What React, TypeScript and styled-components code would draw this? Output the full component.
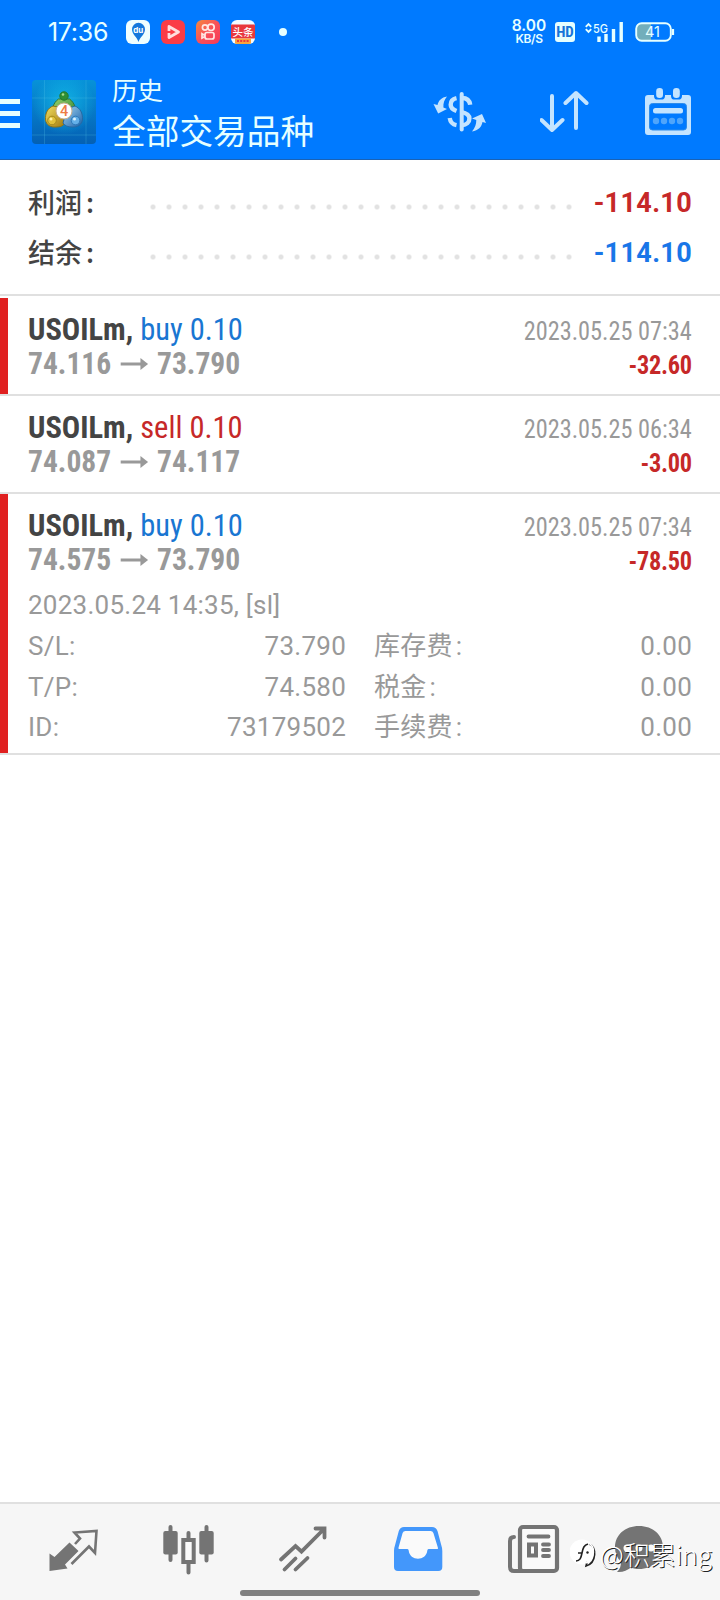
import React from 'react';
import styled, { createGlobalStyle } from 'styled-components';

const GlobalStyle = createGlobalStyle`
  * { box-sizing: border-box; }
  body { margin: 0; background: #fff; }
`;

const BLUE = '#007aff';
const PALE = '#c4e4ff';
const GREY = '#747474';

const Screen = styled.div`
  width: 720px;
  height: 1600px;
  display: flex;
  flex-direction: column;
  background: #fff;
  font-family: Roboto, "Noto Sans CJK SC", sans-serif;
  overflow: hidden;
`;

const Header = styled.header`
  height: 160px;
  background: ${BLUE};
  border-bottom: 1px solid #1a62b5;
  color: #e6ffff;
`;

const StatusBar = styled.div`
  display: flex;
  align-items: center;
  height: 64px;
  padding-left: 48px;
  padding-right: 45px;
`;

const Clock = styled.span`
  width: 78px;
  font: 400 25px/30px Inter, sans-serif;
  letter-spacing: -0.3px;
`;

const AppBadges = styled.div`
  display: flex;
  align-items: center;
  gap: 11px;
  flex: 1;
  svg { display: block; }
`;

const Dot = styled.i`
  width: 8px;
  height: 8px;
  margin-left: 13px;
  border-radius: 50%;
  background: #e6ffff;
`;

const Speed = styled.div`
  display: flex;
  flex-direction: column;
  align-items: center;
  width: 36px;
  margin-right: 8px;
  font: 600 15.5px/13px Inter, sans-serif;
  small { font-size: 12px; line-height: 13px; letter-spacing: -0.4px; }
`;

const HdTag = styled.span`
  width: 20px;
  height: 20px;
  margin-right: 10px;
  border-radius: 3px;
  background: #e6ffff;
  color: #1674d8;
  font: 700 15px/20px "Roboto", sans-serif;
  font-stretch: 75%;
  text-align: center;
`;

const Toolbar = styled.div`
  display: flex;
  align-items: center;
  height: 96px;
  > svg { flex: none; }
`;

const Burger = styled.div`
  width: 20px;
  display: flex;
  flex-direction: column;
  gap: 7px;
  margin: 3px 12px 0 0;
  i { height: 5px; background: #e6ffff; }
`;

const Titles = styled.div`
  flex: 1;
  padding: 0 0 2px 16px;
  font-family: "Noto Sans CJK SC", sans-serif;
`;

const Subtitle = styled.div`
  font-size: 25.5px;
  line-height: 36px;
`;

const Title = styled.div`
  font-size: 33.7px;
  line-height: 45px;
`;

const Actions = styled.div`
  display: flex;
  align-items: center;
  width: 287px;
  gap: 53px;
  svg { display: block; flex: none; }
`;

const Summary = styled.section`
  height: 136px;
  padding: 17px 28px 0;
  border-bottom: 2px solid #e0e0e0;
  margin-bottom: 2px;
`;

const SummaryRow = styled.div`
  display: flex;
  align-items: center;
  height: 50px;
  font-weight: 500;
  color: #444;
`;

const SummaryLabel = styled.span`
  width: 121px;
  margin-top: -1px;
  font: 500 27px/40px "Noto Sans CJK SC", sans-serif;
  white-space: nowrap;
`;

const Colon = styled.span<{ $gap: number }>`
  margin-left: ${p => p.$gap}px;
`;

const Leader = styled.span`
  width: 432px;
  height: 6px;
  margin-top: 10px;
  background: radial-gradient(circle at 4px 3px, #e2e2e2 1.8px, transparent 3.2px) 0 0 / 16px 6px repeat-x;
`;

const SummaryValue = styled.span<{ $color: string }>`
  flex: 1;
  padding-top: 2px;
  text-align: right;
  color: ${p => p.$color};
  font-size: 27px;
  font-weight: 700;
  letter-spacing: 0.35px;
`;

const Deal = styled.article<{ $loss?: boolean }>`
  padding: 14px 28px 0 20px;
  border-left: 8px solid ${p => (p.$loss ? '#e02020' : '#fff')};
  background: #fff;
`;

const Divider = styled.div`
  height: 2px;
  background: #e0e0e0;
`;

const DealHead = styled.div<{ $open: boolean }>`
  display: flex;
  justify-content: space-between;
  height: ${p => (p.$open ? 77 : 82)}px;
  font-family: "Roboto Condensed", Roboto, sans-serif;
  font-stretch: 75%;
  white-space: nowrap;
`;

const DealLeft = styled.div`
  transform: scaleX(0.953);
  transform-origin: left;
`;

const Symbol = styled.div`
  font-size: 32px;
  line-height: 34px;
  font-weight: 700;
  color: #444;
`;

const Side = styled.span<{ $sell?: boolean }>`
  font-weight: 400;
  color: ${p => (p.$sell ? '#c62828' : '#1976d2')};
`;

const Prices = styled.div`
  display: flex;
  align-items: center;
  gap: 9.5px;
  font-size: 31px;
  line-height: 35px;
  font-weight: 700;
  color: #999;
`;

const DealRight = styled.div`
  padding-top: 2px;
  text-align: right;
  font-size: 26px;
  line-height: 34px;
  color: #999;
  transform: scaleX(0.935);
  transform-origin: right;
`;

const Profit = styled.div`
  font-weight: 700;
  letter-spacing: -0.3px;
  color: #c62828;
`;

const Details = styled.div`
  height: 168px;
  font-size: 26px;
  line-height: 41px;
  color: #999;
  font-weight: 400;
  letter-spacing: 0.25px;
`;

const DetailGrid = styled.div`
  display: grid;
  grid-template-columns: 1fr 1fr;
  column-gap: 28px;
  grid-auto-rows: 40.5px;
`;

const Pair = styled.div`
  display: flex;
  justify-content: space-between;
`;

const Spacer = styled.div`
  flex: 1;
`;

const TabBar = styled.nav`
  height: 98px;
  border-top: 2px solid #e0e0e0;
  background: #f6f6f6;
  display: flex;
  flex-direction: column;
  align-items: center;
`;

const Tabs = styled.div`
  display: flex;
  width: 100%;
  height: 86px;
  padding: 11px 0 0 15px;
`;

const Tab = styled.div`
  position: relative;
  flex: none;
  width: 115px;
  display: flex;
  justify-content: center;
  > svg { display: block; flex: none; }
  &:last-child { margin-left: -9px; }
`;

const HomeIndicator = styled.i`
  width: 240px;
  height: 6px;
  border-radius: 3px;
  background: #808080;
`;

const Watermark = styled.div`
  position: absolute;
  left: -11px;
  top: 20px;
  display: flex;
  align-items: center;
  gap: 4px;
  color: #fff;
  font: 300 26px/38px "Noto Sans CJK SC", sans-serif;
  white-space: nowrap;
  text-shadow: 1px 1px 0.5px #222;
`;

const Arrow = () => (
  <svg width="29" height="14" viewBox="0 0 29 14">
    <path d="M0 7h22" stroke="#999" strokeWidth="3" />
    <path d="M21 1l8 6-8 6z" fill="#999" />
  </svg>
);

const MapBadge = () => (
  <svg width="24" height="24" viewBox="0 0 24 24">
    <rect width="24" height="24" rx="6" fill="#effeff" />
    <path d="M12.500 22C11 17 6 14.500 6 9.300a6.500 6.500 0 0 1 13 0c0 5.200-5 7.700-6.500 12.700z" fill="#1478dc" />
    <text x="12.200" y="12.500" fontSize="8" fontWeight="700" fontFamily="Inter" fill="#fff" textAnchor="middle">du</text>
  </svg>
);

const VideoBadge = () => (
  <svg width="24" height="24" viewBox="0 0 24 24">
    <rect width="24" height="24" rx="6" fill="#fb3c46" />
    <path d="M8 6.500l9.500 5.500L8 17.500z" fill="none" stroke="#ffdede" strokeWidth="2.800" strokeLinejoin="round" />
    <path d="M6 12h7" stroke="#fb3c46" strokeWidth="2" />
  </svg>
);

const CameraBadge = () => (
  <svg width="24" height="24" viewBox="0 0 24 24">
    <defs>
      <linearGradient id="cam" x1="0" y1="0" x2="1" y2="1">
        <stop offset="0" stopColor="#f58a3c" />
        <stop offset="0.500" stopColor="#f9505a" />
        <stop offset="1" stopColor="#f63a58" />
      </linearGradient>
    </defs>
    <rect width="24" height="24" rx="6" fill="url(#cam)" />
    <g fill="none" stroke="#ffe8e4" strokeWidth="1.700">
      <circle cx="9" cy="7.500" r="2.600" />
      <circle cx="15" cy="7.300" r="3.200" />
      <rect x="9" y="12.500" width="9" height="6.500" rx="2" />
      <path d="M9 15.500l-3-1.700v4.200l3-1.500" />
    </g>
  </svg>
);

const NewsBadge = () => (
  <svg width="24" height="24" viewBox="0 0 24 24">
    <defs><clipPath id="news"><rect width="24" height="24" rx="6" /></clipPath></defs>
    <g clipPath="url(#news)">
      <rect width="24" height="24" fill="#f4fbff" />
      <rect y="4.500" width="24" height="14" fill="#e8383d" />
      <rect x="4" y="18.500" width="16" height="5.500" fill="#f9a43c" />
      <path d="M6 21h12" stroke="#e8383d" strokeWidth="2" strokeDasharray="2 1.200" />
      <text x="12" y="15.800" fontSize="10.500" fontWeight="500" fontFamily="Noto Sans CJK SC" fill="#fff" textAnchor="middle">头条</text>
    </g>
  </svg>
);

const SignalSvg = styled.svg`
  display: block;
  margin-right: 11px;
`;

const Signal = () => (
  <SignalSvg width="39" height="22" viewBox="0 0 39 22">
    <path d="M.8 5.800L3.500 3l2.700 2.800M.8 8.200L3.500 11l2.700-2.800" fill="none" stroke="#e6ffff" strokeWidth="1.900" />
    <text x="8" y="11.500" fontSize="12" fontFamily="Inter" fontWeight="500" fill="#e6ffff" textLength="15" lengthAdjust="spacingAndGlyphs">5G</text>
    <path d="M14 15.500V21M21 13v8M28.500 8v13M36.200 1v20" stroke="#e6ffff" strokeWidth="3.400" />
  </SignalSvg>
);

const Battery = () => (
  <svg width="40" height="20" viewBox="0 0 40 20">
    <path d="M6 1h10v18H6a5 5 0 0 1-5-5V6a5 5 0 0 1 5-5z" fill="#72aebb" />
    <rect x="1.200" y="1.200" width="34.600" height="17.600" rx="5.500" fill="none" stroke="#e6ffff" strokeWidth="1.900" />
    <path d="M38 7v6" stroke="#e6ffff" strokeWidth="2.200" />
    <text x="17.500" y="15" fontSize="14.500" fontFamily="Inter" fill="#e6ffff" textAnchor="middle">41</text>
  </svg>
);

const Logo = () => (
  <svg width="64" height="64" viewBox="0 0 64 64">
    <defs>
      <linearGradient id="lb" x1="0" y1="0" x2="0" y2="1">
        <stop offset="0" stopColor="#0792d8" />
        <stop offset="1" stopColor="#0460b4" />
      </linearGradient>
      <radialGradient id="lg"><stop offset="0" stopColor="#16c8ee" stopOpacity="0.700" /><stop offset="1" stopColor="#16c8ee" stopOpacity="0" /></radialGradient>
      <linearGradient id="gr" x1="0" y1="0" x2="1" y2="1"><stop offset="0" stopColor="#9ad36c" /><stop offset="1" stopColor="#247a2c" /></linearGradient>
      <linearGradient id="ye" x1="0" y1="0" x2="1" y2="1"><stop offset="0" stopColor="#f2de62" /><stop offset="1" stopColor="#a27b10" /></linearGradient>
      <linearGradient id="bl" x1="0" y1="0" x2="1" y2="1"><stop offset="0" stopColor="#a5d9f4" /><stop offset="1" stopColor="#1b5fa8" /></linearGradient>
    </defs>
    <rect width="64" height="64" rx="4" fill="url(#lb)" />
    <circle cx="32" cy="24" r="31" fill="url(#lg)" />
    <path d="M12.500 0v64M54 0v64M0 18h64M0 55h64" stroke="#58c6ec" strokeOpacity="0.250" />
    <path d="M21 37c-1.500-8 0-14 5.500-18h11c5.500 4 7 10 5.500 18z" fill="url(#gr)" stroke="#2c7535" />
    <path d="M21 26c-5 2-8 7-7.500 14 1 5 5 7.500 10.500 7 4 0 7-1 8-3l-2-16z" fill="url(#ye)" stroke="#8d7518" />
    <path d="M43 26c5 2 8 7 7.500 14-1 5-5 7.500-10.500 7-4 0-7-1-9-4l4-14z" fill="url(#bl)" stroke="#266aa4" />
    <circle cx="32" cy="16" r="4.200" fill="#2f8f35" stroke="#247a2c" />
    <circle cx="31" cy="14.500" r="1.300" fill="#a8dc8c" />
    <circle cx="20" cy="40.500" r="4.300" fill="#e0c13a" stroke="#a58a1c" />
    <circle cx="19" cy="39" r="1.500" fill="#fff3a8" />
    <circle cx="43.500" cy="40.500" r="4.300" fill="#64b0e8" stroke="#2c78b8" />
    <circle cx="42.500" cy="39" r="1.500" fill="#d8f1ff" />
    <circle cx="32" cy="31" r="8" fill="#fff" stroke="#c9b08f" />
    <text x="32" y="36.300" fontSize="14.500" fontWeight="500" fontFamily="Roboto" fill="#ee7b45" textAnchor="middle">4</text>
  </svg>
);

const CurrencyIcon = () => (
  <svg width="54" height="44" viewBox="0 0 54 44">
    <path d="M28.700 4v35.500" fill="none" stroke={PALE} strokeWidth="4" strokeLinecap="round" />
    <g fill="none" stroke={PALE} strokeWidth="4.400">
      <path d="M23.500 8.200c-3.800.8-5.800 3.300-5.800 6.500 0 3.600 2.300 5 5.800 6.300M23.500 35.200c-3.800-.7-6.200-3.300-6.800-7.200M29 8c4.600 0 7.600 2.500 8.200 6.800M28 21.800c5.500 1.200 8.400 3 8.400 6.600 0 4-3 6.600-7.400 6.800" />
    </g>
    <path d="M14 6.500C8.500 7.500 5.500 10.500 4.500 15L.5 14l4.700 9.500 8.800-4.500-3.600-1.600C10.200 13 11.300 10 14 6.500zM39 41.500c6.500-1 9.500-4.500 10.500-9.500l3.500 1-4-9-10 4.500 4.300 1.500c0 4.500-1.300 7.500-4.300 11.500z" fill={PALE} />
  </svg>
);

const SortIcon = () => (
  <svg width="52" height="44" viewBox="0 0 52 44">
    <path d="M12 6v34M1.500 30L12 40l10.500-10M36 38V3.500M25.500 13L36 3l10.500 10" fill="none" stroke={PALE} strokeWidth="4" strokeLinecap="round" strokeLinejoin="round" />
  </svg>
);

const CalendarIcon = () => (
  <svg width="46" height="48" viewBox="0 0 46 48">
    <path d="M3 7h6c0 5 2 4.500 5.500 4.500S20 12 20 7h6c0 5 2 4.500 5.500 4.500S37 12 37 7h6q3 0 3 3v34q0 3-3 3H3q-3 0-3-3V10q0-3 3-3z" fill={PALE} />
    <rect x="11.200" y="0" width="6.800" height="10" rx="3.200" fill={PALE} />
    <rect x="28" y="0" width="6.800" height="10" rx="3.200" fill={PALE} />
    <rect x="4.500" y="15.500" width="37" height="26.500" rx="3" fill={BLUE} stroke="#2d8ceb" />
    <rect x="8" y="20" width="30" height="5.500" rx="2.500" fill={PALE} />
    <g fill="#4fa5fb"><circle cx="11" cy="33" r="3.200" /><circle cx="19" cy="33" r="3.200" /><circle cx="27" cy="33" r="3.200" /><circle cx="35" cy="33" r="3.200" /></g>
  </svg>
);

const TradeIcon = () => (
  <svg width="54" height="64" viewBox="0 0 54 64">
    <path d="M3.500 38.500l5 3.500L23.500 27.500l9 8.500L19 49.500l2.500 4-18 2.500z" fill={GREY} />
    <path d="M29 29l5-5.500-5.500-6L50.500 16 49 38l-6-6.500L25.500 49" fill="none" stroke={GREY} strokeWidth="2.600" />
  </svg>
);

const CandlesIcon = () => (
  <svg width="54" height="64" viewBox="0 0 54 64">
    <path d="M9.500 12v33M45.500 12v33.500M27.500 18v39.500" stroke={GREY} strokeWidth="4" strokeLinecap="round" />
    <rect x="2.300" y="16" width="14.400" height="23.500" rx="2" fill={GREY} />
    <rect x="38.300" y="16" width="14.400" height="23.500" rx="2" fill={GREY} />
    <rect x="22.300" y="25" width="10.400" height="22" fill="#fafafa" stroke={GREY} strokeWidth="4" />
  </svg>
);

const ChartIcon = () => (
  <svg width="54" height="64" viewBox="0 0 54 64">
    <path d="M5 44.500l14.500-13.500 6 5.500L48 14M39.500 13.500h9v9M8.500 54.500l11-11M19.500 54.500l12-11.500" fill="none" stroke={GREY} strokeWidth="3.800" strokeLinecap="round" />
  </svg>
);

const InboxIcon = () => (
  <svg width="54" height="64" viewBox="0 0 54 64">
    <path d="M13 12h28q4 0 5.500 4l4 15q.8 2 .8 5v16q0 4-4 4H7q-4 0-4-4V36q0-3 .8-5l4-15q1.500-4 5.200-4z" fill="#4397fb" />
    <path d="M14.500 16h25q2.200 0 2.900 2l4.600 15q.6 1-1 1h-8.500q-1 0-1.200 1.500c-1 11-17.600 11-18.600 0Q17.500 34 16.500 34H8.500q-1.500 0-1-1.300L11.600 18q.7-2 2.900-2z" fill="#fafafa" />
  </svg>
);

const PaperIcon = () => (
  <svg width="54" height="64" viewBox="0 0 54 64">
    <path d="M8 22q-4 0-4 4v26q0 4 4 4h10" fill="none" stroke={GREY} strokeWidth="4" strokeLinecap="round" />
    <rect x="14" y="12" width="37" height="44" rx="3" fill="#fafafa" stroke={GREY} strokeWidth="4.200" />
    <path d="M22.500 21.500h20M37 29.500h6M37 35h6M37 41h6" stroke={GREY} strokeWidth="3.800" strokeLinecap="round" />
    <rect x="23" y="29.500" width="7" height="11" fill="#fafafa" stroke={GREY} strokeWidth="4" />
  </svg>
);

const ChatIcon = () => (
  <svg width="54" height="64" viewBox="0 0 54 64">
    <path d="M27 11c14 0 24 9 24 21.500S41 54 27 54c-3 0-5-.300-8-1.500-4 3-8 5-14 4.500 3-3 4-6 4-10-4-4-6-9-6-14.500C3 20 13 11 27 11z" fill={GREY} />
    <g fill="#fafafa"><circle cx="15" cy="33" r="3.500" /><circle cx="27" cy="33" r="3.500" /><circle cx="39" cy="33" r="3.500" /></g>
  </svg>
);

const MarkLogo = () => (
  <svg width="26" height="34" viewBox="0 0 26 34">
    <circle cx="12" cy="15" r="12.500" fill="#fff" />
    <g fill="none" strokeWidth="1.600">
      <path d="M6 24c4 0 5-3 6-8 1-5 2-8 6-9M8 16h4M19 7c8 2 8 19-3 22l1-4" stroke="#222" />
      <path d="M18 6c8 3 7 16-2 20" stroke="#fff" />
    </g>
    <circle cx="17.500" cy="15.500" r="1.200" fill="#222" />
  </svg>
);

interface DealData { side: 'buy' | 'sell'; open: string; close: string; time: string; profit: string; loss?: boolean; expanded?: boolean }

const deals: DealData[] = [
  { side: 'buy', open: '74.116', close: '73.790', time: '2023.05.25 07:34', profit: '-32.60', loss: true },
  { side: 'sell', open: '74.087', close: '74.117', time: '2023.05.25 06:34', profit: '-3.00' },
  { side: 'buy', open: '74.575', close: '73.790', time: '2023.05.25 07:34', profit: '-78.50', loss: true, expanded: true },
];

const details: { label: string; value: string; gap: number }[] = [
  { label: 'S/L', value: '73.790', gap: 0 }, { label: '库存费', value: '0.00', gap: 3 },
  { label: 'T/P', value: '74.580', gap: 0 }, { label: '税金', value: '0.00', gap: 3 },
  { label: 'ID', value: '73179502', gap: 0 }, { label: '手续费', value: '0.00', gap: 3 },
];

export default function App() {
  return (
    <Screen>
      <GlobalStyle />
      <Header>
        <StatusBar>
          <Clock>17:36</Clock>
          <AppBadges><MapBadge /><VideoBadge /><CameraBadge /><NewsBadge /><Dot /></AppBadges>
          <Speed>8.00<small>KB/S</small></Speed>
          <HdTag>HD</HdTag>
          <Signal />
          <Battery />
        </StatusBar>
        <Toolbar>
          <Burger><i /><i /><i /></Burger>
          <Logo />
          <Titles>
            <Subtitle>历史</Subtitle>
            <Title>全部交易品种</Title>
          </Titles>
          <Actions>
            <CurrencyIcon />
            <SortIcon />
            <CalendarIcon />
          </Actions>
        </Toolbar>
      </Header>

      <Summary>
        <SummaryRow><SummaryLabel>利润<Colon $gap={4}>:</Colon></SummaryLabel><Leader /><SummaryValue $color="#c62828">-114.10</SummaryValue></SummaryRow>
        <SummaryRow><SummaryLabel>结余<Colon $gap={4}>:</Colon></SummaryLabel><Leader /><SummaryValue $color="#1976e8">-114.10</SummaryValue></SummaryRow>
      </Summary>

      {deals.map((d, i) => (
        <React.Fragment key={i}>
          <Deal $loss={d.loss}>
            <DealHead $open={!!d.expanded}>
              <DealLeft>
                <Symbol>USOILm, <Side $sell={d.side === 'sell'}>{d.side} 0.10</Side></Symbol>
                <Prices>{d.open}<Arrow />{d.close}</Prices>
              </DealLeft>
              <DealRight>{d.time}<Profit>{d.profit}</Profit></DealRight>
            </DealHead>
            {d.expanded && (
              <Details>
                2023.05.24 14:35, [sl]
                <DetailGrid>
                  {details.map(r => (
                    <Pair key={r.label}><span>{r.label}<Colon $gap={r.gap}>:</Colon></span><span>{r.value}</span></Pair>
                  ))}
                </DetailGrid>
              </Details>
            )}
          </Deal>
          <Divider />
        </React.Fragment>
      ))}

      <Spacer />
      <TabBar>
        <Tabs>
          <Tab><TradeIcon /></Tab>
          <Tab><CandlesIcon /></Tab>
          <Tab><ChartIcon /></Tab>
          <Tab><InboxIcon /></Tab>
          <Tab><PaperIcon /></Tab>
          <Tab><ChatIcon /><Watermark><MarkLogo />@积累ing</Watermark></Tab>
        </Tabs>
        <HomeIndicator />
      </TabBar>
    </Screen>
  );
}
